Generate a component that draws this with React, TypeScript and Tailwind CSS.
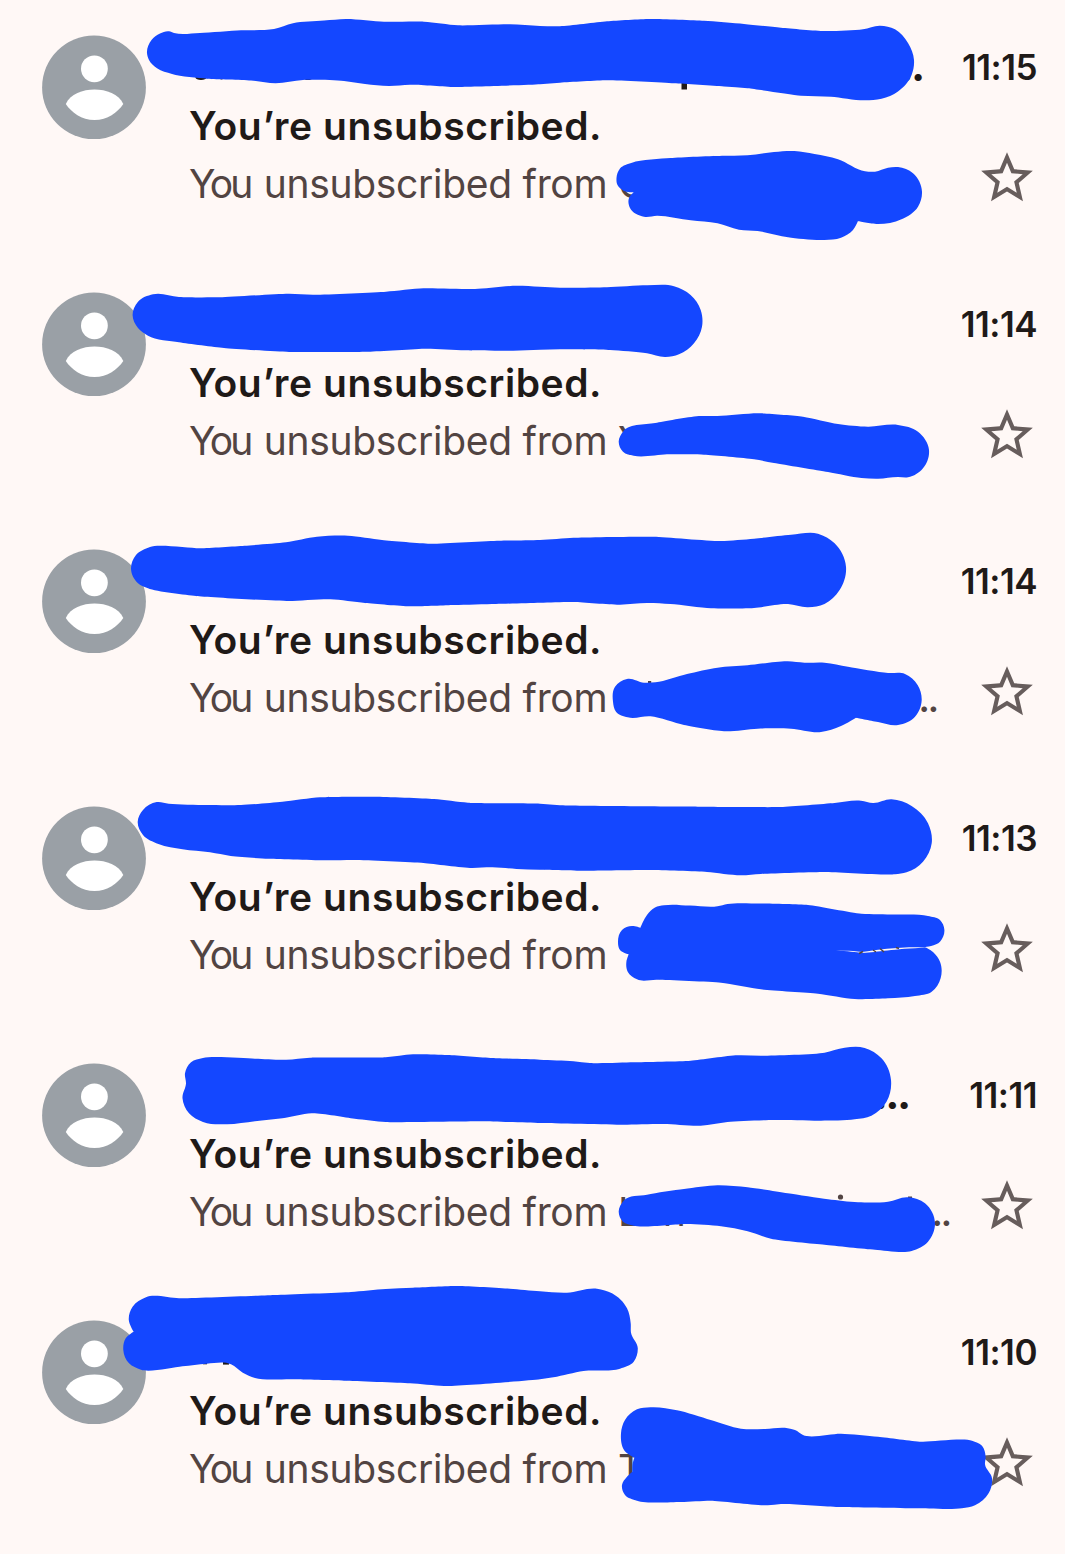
import React from 'react';
import { MdStarBorder } from 'react-icons/md';

type Mail = {
  time: string;
  name: string;
  // visible width of the sender and snippet lines when they are truncated
  senderWidth?: string;
  snippetWidth?: string;
};

const mails: Mail[] = [
  { time: '11:15', name: 'C', senderWidth: 'w-[734px]' },
  { time: '11:14', name: 'Y' },
  { time: '11:14', name: '', snippetWidth: 'w-[748px]' },
  { time: '11:13', name: '' },
  { time: '11:11', name: 'Lon', senderWidth: 'w-[720px]', snippetWidth: 'w-[761px]' },
  { time: '11:10', name: 'T' },
];

// Outlines of the marker strokes, clockwise, as "x,y" pairs
const markers = [
  '147,53 151.5,40 160,33.5 169,31.3 174,33 200,33 241,30.3 274,29 293,23.3 324,20.6 346,19 384,21.7 424,21.7 458,25.3 510,24.3 540,26 560,26.2 607,21.3 650,19 704,20.8 744,24 781,27.7 825,31 863,29.3 880,25.7 895,29.3 908,43 914,60 911.6,75 898,91.5 881.5,98.7 865,100.3 831,96.7 801,95.7 747.6,88.3 724,86.5 674,83.3 607,80.3 560,82.7 540,84.3 454.5,87 410,84.7 389,86 365,84 344,81 303,80 275.5,83.3 251,80.5 207,78.7 172,74 157,68.3 149,60',
  '616.5,178 620,168.5 632,162.7 670.5,158 724,155.7 747.5,155.3 774,152 794.5,151 814.5,154 838,159.3 865,171.3 875,171.7 888,167.7 898,167 913,173.3 922,191.7 918,206.7 901.5,219.3 878,224 858,221 853,230 841,237.7 824.5,240 788,237.3 757.6,231 739,229.7 717.5,223.3 690.6,220.3 657,215.7 644,216.7 630,208 629,198 633.7,192.3 623.7,190.7 617.5,185',
  '132.6,315 138,301.7 153,294.3 179,297 220,297.3 289,293.7 313,294.7 386,291.7 423.5,288.3 475,289 516.5,285.7 540,286.7 560,287.7 607,287.3 647,285.3 674,286.3 690.6,295 700.7,310 702,326.7 694,343.3 679,354.3 665.5,357 647,353.3 610,350 560,349.3 540,349.7 513,350.7 465,350.3 427,348.7 368.5,351.7 289,352 224,348 179,342.3 148,335.7 138,328',
  '618.7,441.7 623.7,430.7 657,422.7 700.7,416 717.5,416 757.6,413.3 803,416.7 838,424 868,426.7 898,425 918,431.7 929,450 923,468.3 908,477.3 898,477 878,478.7 861.5,478 828,472 774,463 754,459.3 704,454.7 667,454.3 633.7,455.7 623,451.7',
  '131,568.3 136,555 150,547 200,548.3 244.5,545.7 286,542.3 317,536.7 348,535.7 382,540 430,543.7 499,540.7 540,540 573.5,537.7 654,536.7 721,541 754,538.7 791,534.7 818,533.7 834.6,543.3 846,566.7 839.6,590 824.5,604 808,607.3 788,604 754,608 711,608.3 670.5,604 647,603 620,604.7 573.5,602 540,602.7 496,604 454.5,605 410,606.3 365,603 330.5,599.3 289,601 196,596 148,588.3 138,583.3',
  '613,701.7 615,686.7 627,679 644,682.7 655.5,682.3 687,674 717.5,667.7 747.6,665.3 787.7,661.3 804.5,662.7 824.5,662.7 848,666.7 888,673 905,674 917.6,685 921.7,700 915,716.7 898,725 878,722 856,717.7 841,726 821,732 791,728.7 757.6,728.7 726,731.3 684,725 650.5,716.3 627.7,717.3 616,711.7',
  '137.7,821.7 143,810 156.7,802 168.7,803.7 206.6,805 241,805 282.4,801.7 320,797.3 375,796.7 434,799 468,802.7 540,803.7 560,805.3 700.7,806.7 781,807 834.6,803 861,800.7 873,803 891.5,799.3 911.6,806 928,823.3 931.7,843.3 923,861.7 906.6,872.3 895,874.3 824.5,872 761,874 741,875.3 707,872 650.5,870 583.5,870.7 540,869.7 516.5,869 492.4,867.3 472,868 423.5,863 354.7,860 327,860.3 268.6,858.7 230.7,856 210,852.3 182.5,849.3 158.4,844 143,835',
  '618,941.7 622,930 632,926 640.4,927.7 647,915 655,907.5 664,905.3 690,905.5 717.5,906.3 727.5,904 760,903.5 808,905 861.4,913.7 895,914.5 928,916 940,920 944.4,930 940,941.7 925,947 933,952 940,961.7 940.7,978 931.7,991.7 915,996 888,998.3 854.7,999 818,993.7 761,989.3 721,982.7 657,979.7 637,979.3 627.7,971.7 626.4,961.7 628.7,954.3 620,950',
  '182.5,1098.3 186,1083.3 185,1073.3 191,1062.3 203,1058 255,1058.7 286,1059.7 310,1057.7 385.7,1057.3 413,1054.3 447.7,1055 492.4,1058 540,1059.7 573.5,1061.3 590,1063 633.7,1062.3 690.6,1060.7 737.5,1055.3 761,1055.7 824.5,1052.7 844.6,1047.7 864.7,1048 881.5,1058.3 891,1080 886.5,1101.7 871.4,1115.7 854.7,1119.3 821,1120.7 774,1120 727.5,1122 700.7,1125.7 664,1124 623.7,1124.7 540,1123 482,1121.3 385.7,1122 354.7,1118.7 311.6,1113.3 282.4,1118.3 255,1121.3 227,1124.3 203,1122 189,1113.3',
  '618.7,1211.7 623.7,1200.7 647,1194.7 684,1189 717.5,1185.3 747.6,1187.3 787.7,1193.3 828,1199.3 858,1202.3 888,1201.7 908,1197.3 925,1203.3 935,1223.3 928,1241.7 911.6,1251 875,1249.7 824.5,1244.7 771,1238.7 747.6,1231.3 721,1226.3 687,1224 633.7,1225.7 623,1221.7',
  '123.3,1350 125.7,1338.3 133.6,1331.7 128.8,1320 132.6,1306.7 146,1297.2 179,1298.3 275.5,1295 351,1292 385.7,1289 413,1287.7 458,1286 509.6,1288.7 540,1291.3 567,1292.7 597,1288.7 612,1293.3 627,1308.3 630.7,1323.3 631,1332.7 637.8,1348.3 633.7,1361.7 620,1368.7 583.5,1371 553.4,1377.3 540,1379.3 444,1386 410,1383.3 344,1380.7 292.7,1379.3 255,1378 242.8,1372.7 231,1364.3 206.6,1363.7 182.5,1366.3 141,1369.7 129,1363.3',
  '621,1433.3 625,1420 637,1409.3 650.5,1407.3 677,1410.3 710.7,1420 741,1428.7 765,1429 787.7,1428.3 795,1430 803,1435 841,1433.7 878,1436.7 921.7,1441.7 972,1440.7 982,1445.7 985.6,1456.7 985,1464.3 992,1478.3 988.6,1493.3 975,1505.3 962,1508.3 915,1508.3 838,1507 781,1504 767.7,1505.3 710.7,1500.7 680.6,1502 637,1500.7 625,1495 622,1485 627,1476.7 632.4,1471.7 632.7,1463.3 634.4,1457.7 625.4,1451.7',
];

// Closed curve through all the points, smooth except where two strokes meet
// in a sharp inward corner.
const toPath = (outline: string) => {
  const pts = outline.split(' ').map((pair) => pair.split(',').map(Number));
  const n = pts.length;
  const dist = (a: number[], b: number[]) => Math.hypot(b[0] - a[0], b[1] - a[1]);
  const tangent = (i: number) => {
    const prev = pts[(i - 1 + n) % n];
    const cur = pts[i];
    const next = pts[(i + 1) % n];
    const d1 = dist(prev, cur);
    const d2 = dist(cur, next);
    const u1 = [(cur[0] - prev[0]) / d1, (cur[1] - prev[1]) / d1];
    const u2 = [(next[0] - cur[0]) / d2, (next[1] - cur[1]) / d2];
    const cross = u1[0] * u2[1] - u1[1] * u2[0];
    const dot = u1[0] * u2[0] + u1[1] * u2[1];
    if (cross < 0 && dot < 0.8) return [0, 0];

    const x = u1[0] * d2 + u2[0] * d1;
    const y = u1[1] * d2 + u2[1] * d1;
    const len = Math.hypot(x, y);
    return [x / len, y / len];
  };

  let d = `M${pts[0][0]} ${pts[0][1]}`;
  for (let i = 0; i < n; i++) {
    const a = pts[i];
    const b = pts[(i + 1) % n];
    const ta = tangent(i);
    const tb = tangent((i + 1) % n);
    // long, nearly straight runs get shorter handles
    const len = Math.min(dist(a, b) * 0.34, 9);
    d += `C${a[0] + ta[0] * len} ${a[1] + ta[1] * len} ${b[0] - tb[0] * len} ${b[1] - tb[1] * len} ${b[0]} ${b[1]}`;
  }
  return d + 'Z';
};

const Avatar = () => (
  <svg viewBox="0 0 104 104" className="w-[104px] h-[104px] shrink-0">
    <circle cx="52" cy="52.4" r="51.9" fill="#9aa0a6" />
    <circle cx="52.4" cy="33.8" r="13.4" fill="#fff" />
    <path
      d="M23.8 69C28 59 41 54.5 52.5 54.5S77 59 81.3 69C75.5 77.5 65.5 85 52.5 85S29.5 77.5 23.8 69Z"
      fill="#fff"
    />
  </svg>
);

const MailRow = ({ mail }: { mail: Mail }) => (
  <li className="h-[257px] flex items-start pl-[42px] pr-[28px]">
    <Avatar />
    <article className="ml-[43px] pt-[3.5px] flex-1 min-w-0 whitespace-nowrap">
      <header className="h-[58px] flex items-center justify-between text-[#1f1a18] font-semibold">
        <span className={`text-[39px] font-extrabold tracking-[-2px] text-right ${mail.senderWidth || ''}`}>
          {mail.senderWidth && '...'}
        </span>
        <time className="text-[35px] tracking-[-0.5px]">{mail.time}</time>
      </header>
      <h2 className="h-[58px] leading-[58px] text-[39px] tracking-[0.56px] font-semibold text-[#1f1a18]">You’re unsubscribed.</h2>
      <div className="flex justify-between items-start">
        <p className={`h-[58px] leading-[58px] text-[39px] tracking-[-0.3px] text-[#524442] flex justify-between ${mail.snippetWidth || ''}`}>
          <span>
            <span className="tracking-[-2.8px]">Yo</span>u unsubscribed from {mail.name}
          </span>
          {mail.snippetWidth && <span className="font-medium tracking-[-2.4px]">...</span>}
        </p>
        <MdStarBorder className="w-[62px] h-[62px] -mr-[0.5px] -mt-2 shrink-0 text-[#675d5c]" />
      </div>
    </article>
  </li>
);

export default function App() {
  return (
    <main className="relative w-[1065px] h-[1554px] overflow-hidden bg-[#fff8f6] font-['Inter',sans-serif]">
      <ul className="pt-[35px]">
        {mails.map((mail, index) => (
          <MailRow key={index} mail={mail} />
        ))}
      </ul>
      <svg viewBox="0 0 1065 1554" className="absolute inset-0 w-full h-full pointer-events-none">
        {/* bits of the names that stick out from under the marker */}
        <g fill="#1f1a18">
          <ellipse cx="201" cy="77.5" rx="5.5" ry="2.4" />
          <circle cx="221.5" cy="78" r="1.6" />
          <ellipse cx="308" cy="78" rx="4" ry="2" />
          <rect x="681.5" y="80" width="5.5" height="9.5" />
          <rect x="203" y="1361" width="4" height="3.3" />
          <rect x="223" y="1361" width="6" height="3.6" />
        </g>
        <g fill="#524442">
          <rect x="648" y="681" width="3.2" height="5" />
          <circle cx="840.5" cy="1197" r="2.6" />
          <rect x="908" y="1196.5" width="4" height="5" />
        </g>
        <g fill="#1447ff">
          {markers.map((outline, index) => (
            <path key={index} d={toPath(outline)} />
          ))}
        </g>
        <path d="M836 951C848 951 856 952 862 953C880 952 890 949 928 947.5C900 946.5 880 949.5 862 952C852 950.5 844 950.5 836 951Z" fill="#fff8f6" />
        <path d="M859 953.5l4-2M873 950l3 2M880 948.5l4 3.5M896 947.5l3 1" stroke="#524442" strokeWidth="1.5" />
      </svg>
    </main>
  );
}
